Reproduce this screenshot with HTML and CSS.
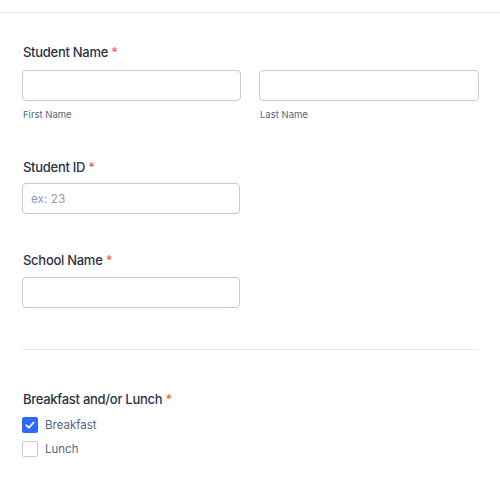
FILE: index.html
```html
<!DOCTYPE html>
<html lang="en">
<head>
<meta charset="utf-8">
<link rel="stylesheet" href="styles.css">
</head>
<body>
<div class="topbar"></div>
<form class="form">
  <div class="field">
    <div class="label">Student Name <span class="req">*</span></div>
    <div class="row">
      <div class="col">
        <input class="input" type="text">
        <div class="sublabel">First Name</div>
      </div>
      <div class="col">
        <input class="input" type="text">
        <div class="sublabel">Last Name</div>
      </div>
    </div>
  </div>
  <div class="field field-id">
    <div class="label">Student ID <span class="req">*</span></div>
    <input class="input half" type="text" placeholder="ex: 23">
  </div>
  <div class="field field-school">
    <div class="label">School Name <span class="req">*</span></div>
    <input class="input half" type="text">
  </div>
  <div class="divider"></div>
  <div class="field field-meal">
    <div class="label">Breakfast and/or Lunch <span class="req">*</span></div>
    <div class="options">
      <label class="option">
        <span class="box checked">
          <svg width="10" height="8" viewBox="0 0 10 8"><path d="M1.2 4.2 L3.8 6.6 L8.8 1.4" fill="none" stroke="#fff" stroke-width="1.6" stroke-linecap="round" stroke-linejoin="round"/></svg>
        </span>
        <span class="opt-text">Breakfast</span>
      </label>
      <label class="option">
        <span class="box"></span>
        <span class="opt-text">Lunch</span>
      </label>
    </div>
  </div>
</form>
</body>
</html>
```

FILE: styles.css
```css
* { box-sizing: border-box; }
html, body { margin: 0; padding: 0; background: #fff; }
body {
  font-family: Inter, "Noto Sans", Arial, sans-serif;
  color: #2c3345;
  width: 500px;
  height: 484px;
  overflow: hidden;
}
.topbar {
  height: 13px;
  border-bottom: 1px solid #e6e8ec;
}
.form {
  padding: 31px 22px 0 22px;
  width: 479px;
}
.label {
  font-size: 13px;
  letter-spacing: -0.28px;
  line-height: 16px;
  font-weight: 450;
  color: #2c3345;
  padding-left: 1px;
  margin-bottom: 10px;
}
.req { color: #f23a3c; opacity: 0.8; letter-spacing: 0; }
.row {
  display: grid;
  grid-template-columns: 219px 220px;
  column-gap: 18px;
}
.input {
  display: block;
  width: 100%;
  height: 31px;
  border: 1px solid #c3cad8;
  border-radius: 4px;
  background: #fff;
  font-family: inherit;
  font-size: 11.8px;
  color: #2c3345;
  padding: 0 8px;
  outline: none;
}
.input::placeholder { color: #8f9bb2; }
.input.half { width: 218px; }
.sublabel {
  font-size: 9.5px;
  line-height: 12px;
  color: #57647e;
  margin-top: 8px;
  padding-left: 1px;
}
.field-id { margin-top: 38px; }
.field-id .label { margin-bottom: 8px; }
.field-school { margin-top: 38px; }
.field-school .label { margin-bottom: 9px; }
.divider {
  margin-top: 41px;
  height: 1px;
  background: #e9eaee;
  width: 457px;
}
.field-meal { margin-top: 41px; }
.options {
  display: flex;
  flex-direction: column;
  gap: 8px;
}
.option {
  display: flex;
  align-items: center;
  gap: 7px;
  height: 16px;
}
.box {
  width: 16px;
  height: 16px;
  border: 1px solid #c3cad8;
  border-radius: 2px;
  background: #fff;
  display: flex;
  align-items: center;
  justify-content: center;
}
.box.checked {
  background: #2e69ff;
  border-color: #2e69ff;
}
.opt-text {
  font-size: 11.5px;
  color: #57647e;
}
```
